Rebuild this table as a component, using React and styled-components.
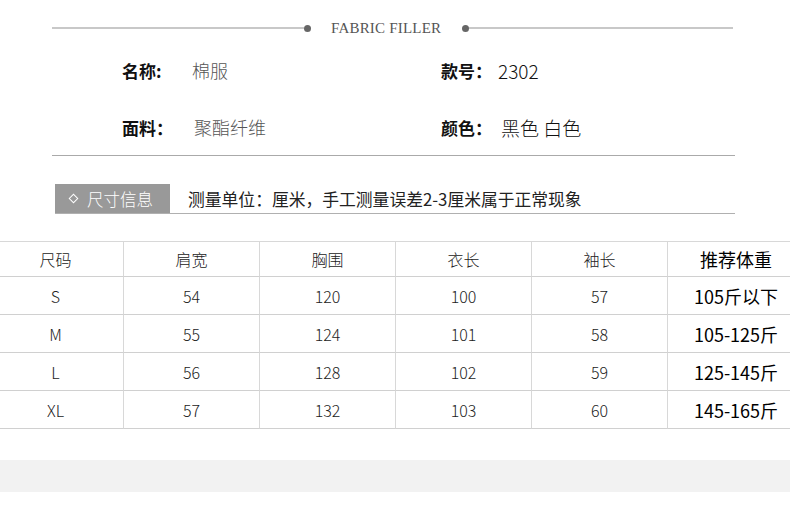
import styled, { createGlobalStyle } from 'styled-components'

const GlobalStyle = createGlobalStyle`
  body {
    margin: 0;
    background: #fff;
    font-family: "Noto Sans CJK SC", "Noto Sans", sans-serif;
  }
`

const Page = styled.div`
  width: 790px;
  height: 528px;
  overflow: hidden;
  padding-top: 18px;
  box-sizing: border-box;
`

const TitleBar = styled.div`
  margin: 0 57px 0 52px;
  height: 20px;
  display: flex;
  align-items: center;
`

const Line = styled.div`
  flex: ${p => p.$w ? 'none' : 1};
  width: ${p => p.$w ? p.$w + 'px' : 'auto'};
  height: 2px;
  background: #c8c8c8;
`

const Dot = styled.span`
  width: 7px;
  height: 7px;
  border-radius: 50%;
  background: #666;
`

const TitleText = styled.div`
  padding: 0 21px 0 20px;
  font-family: "Liberation Serif", serif;
  font-size: 15px;
  color: #555;
  letter-spacing: 0.2px;
`

const InfoGrid = styled.div`
  display: grid;
  grid-template-columns: 319px 1fr;
  grid-template-rows: 57px 30px;
  padding: 17px 0 13px 122px;
`

const InfoItem = styled.div`
  display: flex;
  align-items: center;
  height: 30px;
`

const Label = styled.span`
  font-size: 17px;
  font-weight: 700;
  color: #111;
  width: ${p => p.$w}px;
`

const Value = styled.span`
  font-size: ${p => p.$dark ? '19px' : '18px'};
  font-weight: 300;
  color: ${p => p.$dark ? '#111' : '#555'};
`

const Divider = styled.div`
  margin: 0 55px 0 52px;
  height: 1px;
  background: #aaa;
`

const SizeBar = styled.div`
  margin: 28px 55px 0 55px;
  display: flex;
  align-items: stretch;
  height: 29px;
  border-bottom: 1px solid #b0b0b0;
`

const Tag = styled.div`
  width: 115px;
  background: #999;
  color: #fff;
  font-size: 16.5px;
  font-weight: 300;
  display: flex;
  align-items: center;
  padding-left: 15px;
  box-sizing: border-box;
  gap: 10px;
`

const Diamond = styled.span`
  width: 5px;
  height: 5px;
  border: 1px solid #fff;
  transform: rotate(45deg);
`

const Note = styled.div`
  padding-left: 18px;
  display: flex;
  align-items: center;
  font-size: 16.8px;
  color: #222;
`

const Table = styled.div`
  margin: 27px 0 0 -12px;
  width: 816px;
  display: grid;
  grid-template-columns: repeat(6, 136px);
  grid-template-rows: 35px repeat(4, 38px);
  border-top: 1px solid #d8d8d8;
`

const Cell = styled.div`
  display: flex;
  align-items: center;
  justify-content: center;
  border-bottom: 1px solid #d0d0d0;
  border-right: ${p => p.$last ? 'none' : '1px solid #d8d8d8'};
  font-size: ${p => p.$strong ? '18px' : '16px'};
  font-weight: ${p => p.$strong ? 400 : 300};
  color: ${p => p.$strong ? '#000' : '#222'};
  white-space: nowrap;
`

const Band = styled.div`
  margin-top: 31px;
  height: 32px;
  background: #f2f2f2;
`

const headers = ['尺码', '肩宽', '胸围', '衣长', '袖长', '推荐体重']

const rows = [
  ['S', '54', '120', '100', '57', '105斤以下'],
  ['M', '55', '124', '101', '58', '105-125斤'],
  ['L', '56', '128', '102', '59', '125-145斤'],
  ['XL', '57', '132', '103', '60', '145-165斤'],
]

export default function App() {
  return (
    <Page>
      <GlobalStyle />
      <TitleBar>
        <Line $w={252} />
        <Dot />
        <TitleText>FABRIC FILLER</TitleText>
        <Dot />
        <Line />
      </TitleBar>

      <InfoGrid>
        <InfoItem>
          <Label $w={70}>名称:</Label>
          <Value>棉服</Value>
        </InfoItem>
        <InfoItem>
          <Label $w={57}>款号：</Label>
          <Value $dark>2302</Value>
        </InfoItem>
        <InfoItem>
          <Label $w={72}>面料：</Label>
          <Value>聚酯纤维</Value>
        </InfoItem>
        <InfoItem>
          <Label $w={60}>颜色：</Label>
          <Value $dark>黑色 白色</Value>
        </InfoItem>
      </InfoGrid>

      <Divider />

      <SizeBar>
        <Tag>
          <Diamond />
          尺寸信息
        </Tag>
        <Note>测量单位：厘米，手工测量误差2-3厘米属于正常现象</Note>
      </SizeBar>

      <Table>
        {headers.map((h, i) => (
          <Cell key={h} $last={i === 5} $strong={i === 5}>{h}</Cell>
        ))}
        {rows.map(row =>
          row.map((v, i) => (
            <Cell key={row[0] + i} $last={i === 5} $strong={i === 5}>{v}</Cell>
          ))
        )}
      </Table>

      <Band />
    </Page>
  )
}
